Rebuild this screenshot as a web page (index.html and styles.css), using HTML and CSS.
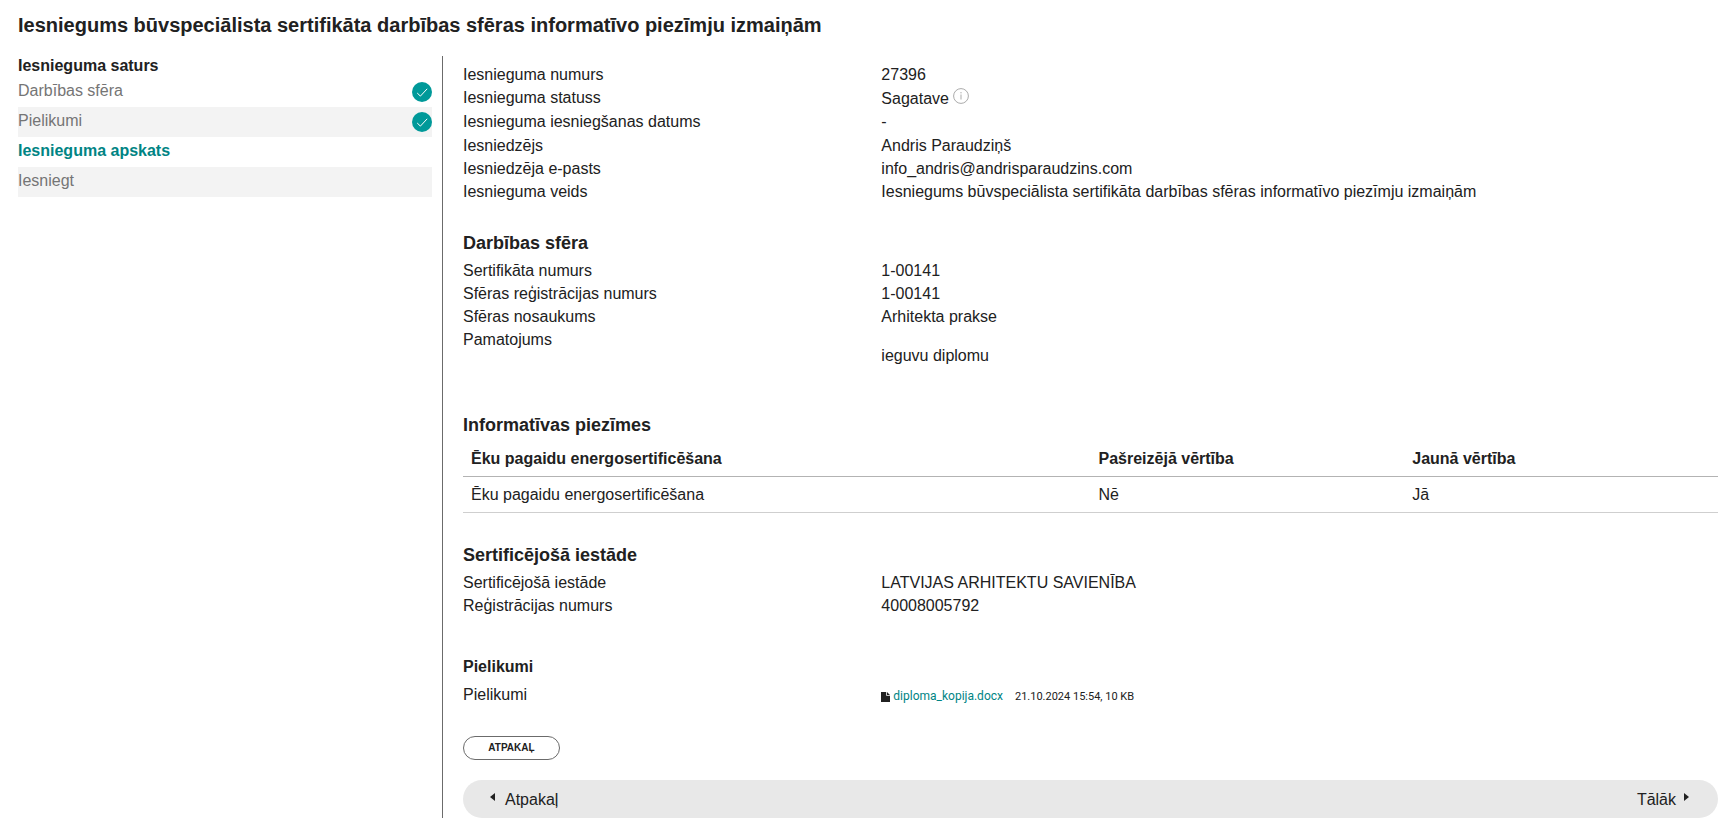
FILE: index.html
```html
<!DOCTYPE html>
<html lang="lv">
<head>
<meta charset="utf-8">
<meta name="viewport" content="width=device-width, initial-scale=1">
<title>Iesniegums būvspeciālista sertifikāta darbības sfēras informatīvo piezīmju izmaiņām</title>
<link rel="stylesheet" href="styles.css">
</head>
<body>
<div class="page">
  <h1 class="page-title">Iesniegums būvspeciālista sertifikāta darbības sfēras informatīvo piezīmju izmaiņām</h1>
  <div class="layout">
    <nav class="sidebar" aria-labelledby="steps-title">
      <h2 class="sidebar-title" id="steps-title">Iesnieguma saturs</h2>
      <ul class="steps">
        <li class="step"><a class="step-link" href="#sfera">Darbības sfēra</a>
          <svg class="step-check" viewBox="0 0 20 20" aria-hidden="true"><circle cx="10" cy="10" r="10"/><path d="M5.2 11l3.2 3.1 6.8-7.3"/></svg></li>
        <li class="step"><a class="step-link" href="#pielikumi">Pielikumi</a>
          <svg class="step-check" viewBox="0 0 20 20" aria-hidden="true"><circle cx="10" cy="10" r="10"/><path d="M5.2 11l3.2 3.1 6.8-7.3"/></svg></li>
        <li class="step"><a class="step-link step-current" href="#apskats" aria-current="step">Iesnieguma apskats</a></li>
        <li class="step"><a class="step-link" href="#iesniegt">Iesniegt</a></li>
      </ul>
    </nav>
    <main class="content" id="apskats">
      <dl class="fields">
        <div class="field"><dt>Iesnieguma numurs</dt><dd>27396</dd></div>
        <div class="field field-tall"><dt>Iesnieguma statuss</dt><dd class="status">Sagatave
          <svg class="info" viewBox="0 0 16 16" role="img" aria-label="Informācija"><circle cx="8" cy="8" r="7.4"/><path d="M8 6.5v5M8 4v1.4"/></svg></dd></div>
        <div class="field field-tall"><dt>Iesnieguma iesniegšanas datums</dt><dd>-</dd></div>
        <div class="field"><dt>Iesniedzējs</dt><dd>Andris Paraudziņš</dd></div>
        <div class="field"><dt>Iesniedzēja e-pasts</dt><dd>info_andris@andrisparaudzins.com</dd></div>
        <div class="field"><dt>Iesnieguma veids</dt><dd>Iesniegums būvspeciālista sertifikāta darbības sfēras informatīvo piezīmju izmaiņām</dd></div>
      </dl>

      <section class="section section-first" id="sfera">
        <h2 class="section-title">Darbības sfēra</h2>
        <dl class="fields">
          <div class="field"><dt>Sertifikāta numurs</dt><dd>1-00141</dd></div>
          <div class="field"><dt>Sfēras reģistrācijas numurs</dt><dd>1-00141</dd></div>
          <div class="field"><dt>Sfēras nosaukums</dt><dd>Arhitekta prakse</dd></div>
          <div class="field"><dt>Pamatojums</dt><dd><p class="note">ieguvu diplomu</p></dd></div>
        </dl>
      </section>

      <section class="section">
        <h2 class="section-title">Informatīvas piezīmes</h2>
        <table class="notes">
          <thead>
            <tr><th class="col-name" scope="col">Ēku pagaidu energosertificēšana</th><th class="col-value" scope="col">Pašreizējā vērtība</th><th class="col-value" scope="col">Jaunā vērtība</th></tr>
          </thead>
          <tbody>
            <tr><td>Ēku pagaidu energosertificēšana</td><td>Nē</td><td>Jā</td></tr>
          </tbody>
        </table>
      </section>

      <section class="section">
        <h2 class="section-title">Sertificējošā iestāde</h2>
        <dl class="fields">
          <div class="field"><dt>Sertificējošā iestāde</dt><dd>LATVIJAS ARHITEKTU SAVIENĪBA</dd></div>
          <div class="field"><dt>Reģistrācijas numurs</dt><dd>40008005792</dd></div>
        </dl>
      </section>

      <section class="section section-files" id="pielikumi">
        <h3 class="section-title section-subtitle">Pielikumi</h3>
        <dl class="fields">
          <div class="field"><dt>Pielikumi</dt>
            <dd class="file">
              <svg class="file-icon" viewBox="0 0 9 10" aria-hidden="true"><path d="M0 0h5.2v3.8H9V10H0zM6 0l3 3H6z"/></svg>
              <a class="file-link" href="#pielikumi">diploma_kopija.docx</a>
              <span class="file-meta">21.10.2024 15:54, 10 KB</span>
            </dd></div>
        </dl>
      </section>

      <button class="back" type="button">ATPAKAĻ</button>

      <nav class="pager" aria-label="Soļi">
        <a class="pager-link" href="#pielikumi"><svg class="arrow" viewBox="0 0 5 8" aria-hidden="true"><path d="M5 0v8L0 4z"/></svg>Atpakaļ</a>
        <a class="pager-link pager-next" href="#iesniegt">Tālāk<svg class="arrow" viewBox="0 0 5 8" aria-hidden="true"><path d="M0 0v8l5-4z"/></svg></a>
      </nav>
    </main>
  </div>
</div>
</body>
</html>
```
FILE: styles.css
```css
* {
  box-sizing: border-box;
}

body {
  margin: 0;
  background: #fff;
  color: #212121;
  font: 16px/23px "Liberation Sans", Arial, sans-serif;
}

h1, h2, h3, p, dl, dd, ul {
  margin: 0;
  padding: 0;
}

a {
  color: inherit;
  text-decoration: none;
}

.page {
  padding: 11px 10px 5px 18px;
}

.page-title {
  margin-bottom: 17px;
  font-size: 20px;
  line-height: 28px;
}

.layout {
  display: flex;
}

/* Steps */

.sidebar {
  flex: 0 0 25%;
  padding-right: 10px;
  border-right: 1px solid #6b6b6b;
}

.sidebar-title {
  padding-bottom: 1px;
  font-size: 16px;
  line-height: 20px;
}

.steps {
  list-style: none;
}

.step {
  display: flex;
  justify-content: space-between;
  min-height: 30px;
  padding-top: 2px;
  color: #757575;
}

.step:nth-child(even) {
  background: #f3f3f3;
}

.step-current {
  color: #008484;
  font-weight: bold;
}

.step-check {
  flex: none;
  width: 20px;
  height: 20px;
  margin-top: 3px;
  fill: #009999;
}

.step-check path {
  fill: none;
  stroke: #fff;
  stroke-width: 1;
}

/* Application overview */

.content {
  flex: 1;
  min-width: 0;
  padding: 7px 0 0 20px;
}

.field {
  display: grid;
  grid-template-columns: 1fr 2fr;
}

.field-tall {
  min-height: 24px;
}

.status {
  display: flex;
  align-items: center;
  gap: 4px;
}

.info {
  width: 16px;
  height: 16px;
  margin-bottom: 4px;
  fill: none;
  stroke: #ababab;
  stroke-width: 1;
}

.note {
  margin: 16px 0;
}

.section {
  margin-top: 30px;
}

.section-first {
  margin-top: 28px;
}

.section-files {
  margin-top: 38px;
}

.section-title {
  margin-bottom: 4px;
  font-size: 18px;
  line-height: 24px;
}

.section-subtitle {
  font-size: 16px;
}

.notes {
  width: 100%;
  border-collapse: separate;
  border-spacing: 0;
  table-layout: fixed;
  text-align: left;
}

.notes th,
.notes td {
  padding: 6px 8px;
  border-bottom: 1px solid #cfcfcf;
}

.notes th {
  border-bottom-color: #b3b3b3;
}

.col-name {
  width: 50%;
}

.col-value {
  width: 25%;
}

.file {
  display: flex;
  align-items: center;
  padding-top: 4px;
  font: 12px/19px Roboto, sans-serif;
}

.file-icon {
  flex: none;
  width: 9px;
  height: 10px;
  margin-right: 3px;
  fill: #212121;
}

.file-link {
  margin-right: 12px;
  color: #008484;
}

.file-meta {
  font-size: 11px;
}

.back {
  display: block;
  min-width: 97px;
  height: 24px;
  margin-top: 30px;
  padding: 0 20px;
  border: 1px solid #6b6b6b;
  border-radius: 12px;
  background: #fff;
  color: #212121;
  font: bold 10px/22px "Liberation Sans Narrow", "Liberation Sans", sans-serif;
}

.pager {
  display: flex;
  justify-content: space-between;
  margin-top: 20px;
  padding: 8px 29px 7px 27px;
  border-radius: 19px;
  background: #e8e8e8;
}

.pager-link {
  display: flex;
  gap: 10px;
}

.pager-next {
  gap: 8px;
}

.arrow {
  width: 5px;
  height: 8px;
  margin-top: 5px;
  fill: #212121;
}
```
